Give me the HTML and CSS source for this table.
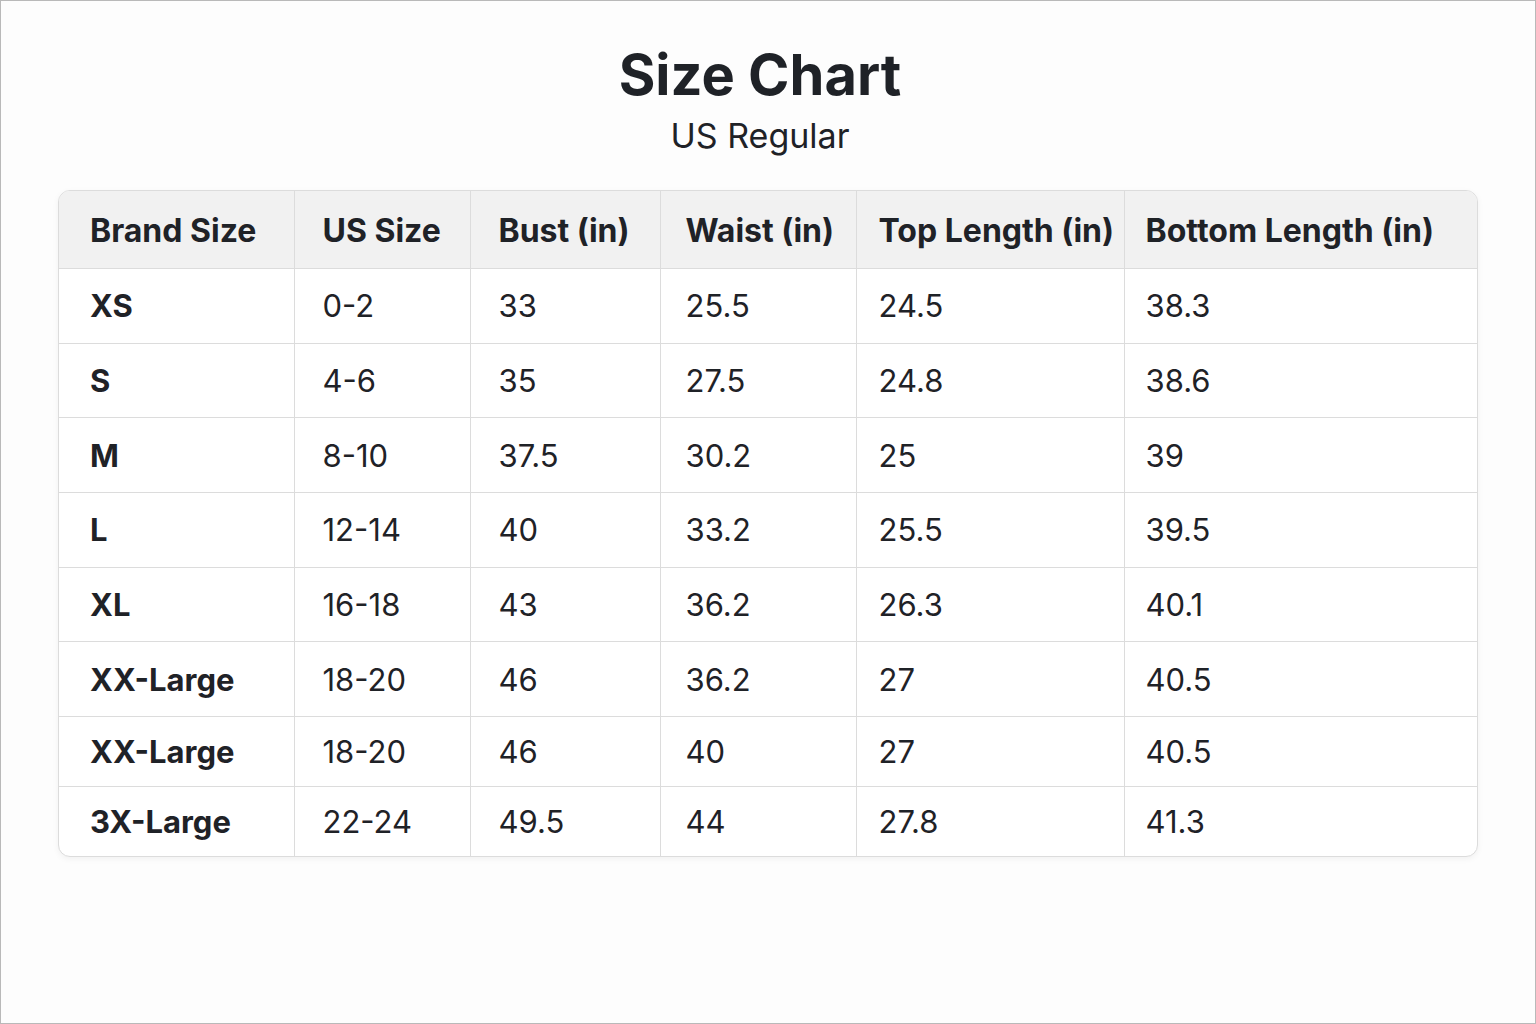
FILE: index.html
```html
<!DOCTYPE html>
<html>
<head>
<meta charset="utf-8">
<link rel="stylesheet" href="styles.css">
</head>
<body>
<div class="page">
  <header class="head">
    <h1 class="title">Size Chart</h1>
    <p class="subtitle">US Regular</p>
  </header>
  <div class="card">
    <table class="chart">
      <colgroup>
        <col class="c1"><col class="c2"><col class="c3"><col class="c4"><col class="c5"><col class="c6">
      </colgroup>
      <thead>
        <tr>
          <th>Brand Size</th><th>US Size</th><th>Bust (in)</th><th>Waist (in)</th><th>Top Length (in)</th><th>Bottom Length (in)</th>
        </tr>
      </thead>
      <tbody>
        <tr><td class="sz">XS</td><td>0-2</td><td>33</td><td>25.5</td><td>24.5</td><td>38.3</td></tr>
        <tr><td class="sz">S</td><td>4-6</td><td>35</td><td>27.5</td><td>24.8</td><td>38.6</td></tr>
        <tr><td class="sz">M</td><td>8-10</td><td>37.5</td><td>30.2</td><td>25</td><td>39</td></tr>
        <tr><td class="sz">L</td><td>12-14</td><td>40</td><td>33.2</td><td>25.5</td><td>39.5</td></tr>
        <tr><td class="sz">XL</td><td>16-18</td><td>43</td><td>36.2</td><td>26.3</td><td>40.1</td></tr>
        <tr><td class="sz">XX-Large</td><td>18-20</td><td>46</td><td>36.2</td><td>27</td><td>40.5</td></tr>
        <tr class="short"><td class="sz">XX-Large</td><td>18-20</td><td>46</td><td>40</td><td>27</td><td>40.5</td></tr>
        <tr class="short"><td class="sz">3X-Large</td><td>22-24</td><td>49.5</td><td>44</td><td>27.8</td><td>41.3</td></tr>
      </tbody>
    </table>
  </div>
</div>
</body>
</html>
```

FILE: styles.css
```css
html, body {
  margin: 0;
  padding: 0;
}
body {
  background: #fdfdfd;
  font-family: Inter, "Noto Sans", sans-serif;
  color: #1f2227;
}
.page {
  box-sizing: border-box;
  width: 1536px;
  height: 1024px;
  border: 1px solid #b9b9b9;
  padding: 38px 0 0 57px;
}
.head {
  width: 1404px;
  text-align: center;
}
.title {
  margin: 0;
  font-size: 56px;
  font-weight: 700;
  line-height: 72px;
}
.subtitle {
  margin: 3px 0 0;
  font-size: 34px;
  line-height: 44px;
  font-weight: 400;
}
.card {
  margin-top: 32px;
  width: 1418px;
  background: #fff;
  border: 1px solid #dcdcdc;
  border-radius: 12px;
  overflow: hidden;
  box-shadow: 0 2px 6px rgba(0, 0, 0, 0.05);
}
.chart {
  width: 100%;
  border-collapse: collapse;
  table-layout: fixed;
}
.c1 { width: 235px; }
.c2 { width: 176px; }
.c3 { width: 190px; }
.c4 { width: 196px; }
.c5 { width: 268px; }
.c6 { width: 353px; }
.chart th, .chart td {
  text-align: left;
  border-left: 1px solid #dcdcdc;
  border-top: 1px solid #dcdcdc;
  padding: 0 0 0 28px;
  white-space: nowrap;
}
.chart th:first-child, .chart td:first-child {
  border-left: none;
  padding-left: 31px;
}
.chart th:nth-child(4), .chart td:nth-child(4) { padding-left: 25px; }
.chart th:nth-child(5), .chart td:nth-child(5) { padding-left: 22px; }
.chart th:nth-child(6), .chart td:nth-child(6) { padding-left: 21px; }
.chart thead th {
  border-top: none;
  background: #f1f1f1;
  height: 75px;
  font-size: 32px;
  font-weight: 700;
  padding-top: 2px;
}
.chart td {
  height: 73.67px;
  font-size: 31px;
  font-weight: 400;
}
.chart tr.short td {
  height: 69px;
}
.chart td.sz {
  font-weight: 700;
}
```
